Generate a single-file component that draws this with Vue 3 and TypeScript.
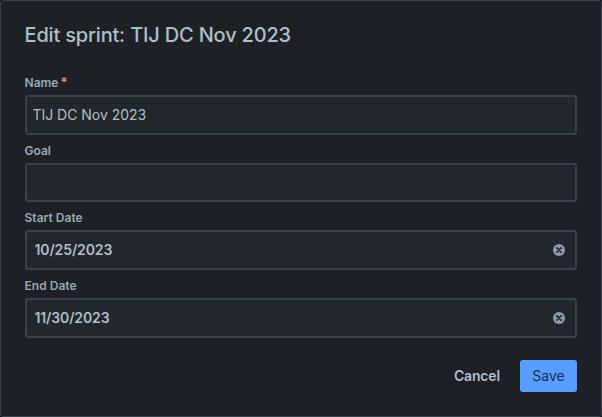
<script setup lang="ts">
import { reactive } from 'vue'

interface Field {
  id: string
  label: string
  value: string
  kind: 'text' | 'date'
  required?: boolean
}

const fields = reactive<Field[]>([
  { id: 'name', label: 'Name', value: 'TIJ DC Nov 2023', kind: 'text', required: true },
  { id: 'goal', label: 'Goal', value: '', kind: 'text' },
  { id: 'start', label: 'Start Date', value: '10/25/2023', kind: 'date' },
  { id: 'end', label: 'End Date', value: '11/30/2023', kind: 'date' },
])
</script>

<template>
  <form class="dialog" @submit.prevent>
    <h1 class="title">Edit sprint: TIJ DC Nov 2023</h1>
    <div class="fields">
      <div v-for="field in fields" :key="field.id" class="field" :class="field.id">
        <label class="label" :for="field.id">{{ field.label }}<span v-if="field.required" class="required">*</span></label>
        <div class="control" :class="field.kind">
          <input :id="field.id" v-model="field.value" class="input" type="text" spellcheck="false" autocomplete="off" />
          <button v-if="field.kind === 'date'" class="clear" type="button" aria-label="Clear" @click="field.value = ''">
            <svg width="12" height="12" viewBox="0 0 12 12">
              <circle cx="6" cy="6" r="6" fill="#8c9bab" />
              <path d="M3.9 3.9l4.2 4.2M8.1 3.9L3.9 8.1" stroke="#22272b" stroke-width="1.7" stroke-linecap="round" />
            </svg>
          </button>
        </div>
      </div>
    </div>
    <div class="actions">
      <button class="btn cancel" type="button">Cancel</button>
      <button class="btn save" type="submit">Save</button>
    </div>
  </form>
</template>

<style>
body {
  background: #101214;
}
</style>

<style scoped>
.dialog {
  box-sizing: border-box;
  width: 602px;
  height: 417px;
  padding: 21px 24px 24px;
  border: 1px solid #38414a;
  border-radius: 3px;
  background: #1d2125;
  color: #b1bdca;
  font-family: Inter, 'Liberation Sans', sans-serif;
}
.title {
  margin: 0 0 0 -0.5px;
  font-size: 20px;
  font-weight: 500;
  line-height: 26px;
  letter-spacing: -0.18px;
}
.fields {
  padding-top: 27px;
}
.field {
  box-sizing: border-box;
  height: 68px;
}
.field.goal {
  height: 67px;
}
.label {
  display: block;
  height: 20px;
  margin-left: -0.5px;
  font-size: 12px;
  font-weight: 600;
  line-height: 16px;
  letter-spacing: 0.02px;
  color: #9aa8b7;
}
.required {
  padding-left: 2px;
  color: #f58a82;
  font-size: 13px;
  line-height: 1;
}
.control {
  box-sizing: border-box;
  display: flex;
  align-items: center;
  height: 40px;
  padding: 0 10px 0 5.5px;
  border: 2px solid #38414a;
  border-radius: 3px;
  background: #22272b;
}
.goal .control {
  height: 39px;
}
.control.date {
  padding-left: 7.5px;
}
.input {
  flex: 1;
  min-width: 0;
  padding: 0;
  border: 0;
  outline: 0;
  background: transparent;
  color: #b1bdca;
  font: 400 14px/20px Inter, 'Liberation Sans', sans-serif;
  letter-spacing: -0.03px;
}
.date .input {
  font-weight: 600;
  letter-spacing: -0.12px;
}
.clear {
  display: flex;
  padding: 0;
  border: 0;
  background: none;
}
.actions {
  display: flex;
  justify-content: flex-end;
  gap: 8px;
  padding-top: 14px;
}
.btn {
  height: 32px;
  padding: 0 12px;
  border: 0;
  border-radius: 3px;
  font: 500 14px/32px Inter, 'Liberation Sans', sans-serif;
}
.cancel {
  background: transparent;
  color: #b1bdca;
  font-weight: 600;
  letter-spacing: -0.15px;
}
.save {
  width: 57px;
  background: #579dff;
  color: #1d2f4a;
  font-weight: 400;
}
</style>
